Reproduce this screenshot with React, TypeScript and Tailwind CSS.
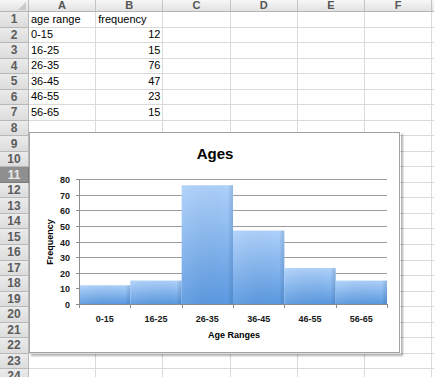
import React from "react";

const cols = ["A", "B", "C", "D", "E", "F"];
const data: [string, number][] = [
  ["0-15", 12],
  ["16-25", 15],
  ["26-35", 76],
  ["36-45", 47],
  ["46-55", 23],
  ["56-65", 15],
];

function Chart() {
  const x0 = 50;
  const x1 = 358;
  const yTop = 47;
  const yZero = 172;
  const per = (yZero - yTop) / 80;
  const bw = (x1 - x0) / 6;
  const ticks = [0, 10, 20, 30, 40, 50, 60, 70, 80];
  return (
    <svg width="372" height="222" viewBox="0 0 372 222" className="block">
      <defs>
        <linearGradient id="barg" x1="0" y1="0" x2="0" y2="1">
          <stop offset="0" stopColor="#aed1fb" />
          <stop offset="1" stopColor="#5a99e0" />
        </linearGradient>
        <linearGradient id="barh" x1="0" y1="0" x2="1" y2="0">
          <stop offset="0" stopColor="#ffffff" stopOpacity="0.08" />
          <stop offset="0.9" stopColor="#000000" stopOpacity="0" />
          <stop offset="1" stopColor="#1a4f90" stopOpacity="0.18" />
        </linearGradient>
      </defs>
      <rect x="0.5" y="0.5" width="370" height="220" fill="#ffffff" stroke="#a3a3a3" />
      <text
        x="186"
        y="27"
        textAnchor="middle"
        fontFamily="'Liberation Sans', Arial, sans-serif"
        fontWeight="bold"
        fontSize="15"
        fill="#000"
      >
        Ages
      </text>
      {ticks.map((t) => {
        const y = Math.round(yZero - t * per) + 0.5;
        return (
          <g key={t}>
            {t > 0 && <line x1={x0} x2={x1} y1={y} y2={y} stroke="#9c9c9c" strokeWidth="1" />}
            <line x1={x0 - 3} x2={x0} y1={y} y2={y} stroke="#8c8c8c" strokeWidth="1" />
            <text
              x={x0 - 9}
              y={y + 3.5}
              textAnchor="end"
              fontFamily="'Liberation Sans', Arial, sans-serif"
              fontWeight="bold"
              fontSize="9"
              fill="#1a1a1a"
            >
              {t}
            </text>
          </g>
        );
      })}
      {data.map(([label, v], i) => {
        const bx = x0 + i * bw;
        const h = v * per;
        return (
          <g key={label}>
            <rect x={bx} y={yZero - h} width={bw} height={h} fill="url(#barg)" />
            <rect x={bx} y={yZero - h} width={bw} height={h} fill="url(#barh)" />
            <text
              x={bx + bw / 2}
              y={190}
              textAnchor="middle"
              fontFamily="'Liberation Sans', Arial, sans-serif"
              fontWeight="bold"
              fontSize="9"
              fill="#1a1a1a"
            >
              {label}
            </text>
          </g>
        );
      })}
      <line x1={x0 + 0.5} x2={x0 + 0.5} y1={yTop} y2={yZero + 3} stroke="#8c8c8c" strokeWidth="1" />
      <line x1={x0} x2={x1} y1={yZero + 0.5} y2={yZero + 0.5} stroke="#8c8c8c" strokeWidth="1" />
      {Array.from({ length: 7 }).map((_, i) => {
        const x = Math.round(x0 + i * bw) + 0.5;
        return <line key={i} x1={x} x2={x} y1={yZero} y2={yZero + 4} stroke="#8c8c8c" strokeWidth="1" />;
      })}
      <text
        x="205"
        y="206"
        textAnchor="middle"
        fontFamily="'Liberation Sans', Arial, sans-serif"
        fontWeight="bold"
        fontSize="9"
        fill="#000"
      >
        Age Ranges
      </text>
      <text
        x="0"
        y="0"
        transform="translate(24 110) rotate(-90)"
        textAnchor="middle"
        fontFamily="'Liberation Sans', Arial, sans-serif"
        fontWeight="bold"
        fontSize="9"
        fill="#000"
      >
        Frequency
      </text>
    </svg>
  );
}

export default function App() {
  const rows = Array.from({ length: 24 }, (_, i) => i + 1);
  const cellText = (r: number, c: number): { t: string; right?: boolean } | null => {
    if (r === 1) {
      if (c === 0) return { t: "age range" };
      if (c === 1) return { t: "frequency" };
      return null;
    }
    if (r >= 2 && r <= 7) {
      const d = data[r - 2];
      if (c === 0) return { t: d[0] };
      if (c === 1) return { t: String(d[1]), right: true };
    }
    return null;
  };
  return (
    <div
      className="relative w-[434px] h-[377px] overflow-hidden bg-white"
      style={{ fontFamily: "'Liberation Sans', Arial, sans-serif" }}
    >
      <div className="flex h-[12px] bg-gradient-to-b from-[#f7f7f7] to-[#e2e2e2] border-b border-[#b5b5b5]">
        <div className="relative w-[29px] shrink-0 border-r border-[#bcbcbc]">
          <div className="absolute right-[2px] bottom-[1px] w-0 h-0 border-l-[8px] border-l-transparent border-b-[8px] border-b-[#c9c9c9]" />
        </div>
        {cols.map((c) => (
          <div
            key={c}
            className="w-[67.2px] shrink-0 border-r border-[#c4c4c4] flex items-center justify-center text-[11px] leading-none font-bold text-[#555]"
          >
            {c}
          </div>
        ))}
        <div className="flex-1" />
      </div>
      {rows.map((r) => (
        <div key={r} className="flex h-[15.545px]">
          <div
            className={
              r === 11
                ? "w-[29px] shrink-0 flex items-center justify-center bg-[#8f8f8f] border-r border-b border-[#7a7a7a] text-[12px] leading-none font-bold text-[#e9e9e9]"
                : "w-[29px] shrink-0 flex items-center justify-center bg-gradient-to-b from-[#ebebeb] to-[#dcdcdc] border-r border-b border-[#b8b8b8] text-[12px] leading-none font-bold text-[#5c5c5c]"
            }
          >
            {r}
          </div>
          {cols.map((c, ci) => {
            const ct = cellText(r, ci);
            return (
              <div
                key={c}
                className={
                  ct && ct.right
                    ? "w-[67.2px] shrink-0 border-r border-b border-[#dadada] flex items-center justify-end pr-[2px] text-[11px] leading-none text-black"
                    : "w-[67.2px] shrink-0 border-r border-b border-[#dadada] flex items-center pl-[2px] text-[11px] leading-none text-black"
                }
              >
                {ct ? ct.t : ""}
              </div>
            );
          })}
          <div className="flex-1 border-b border-[#dadada]" />
        </div>
      ))}
      <div className="absolute left-[29px] top-[132px] w-[372px] h-[222px] shadow-[2px_2px_2px_rgba(0,0,0,0.3)]">
        <Chart />
      </div>
    </div>
  );
}
